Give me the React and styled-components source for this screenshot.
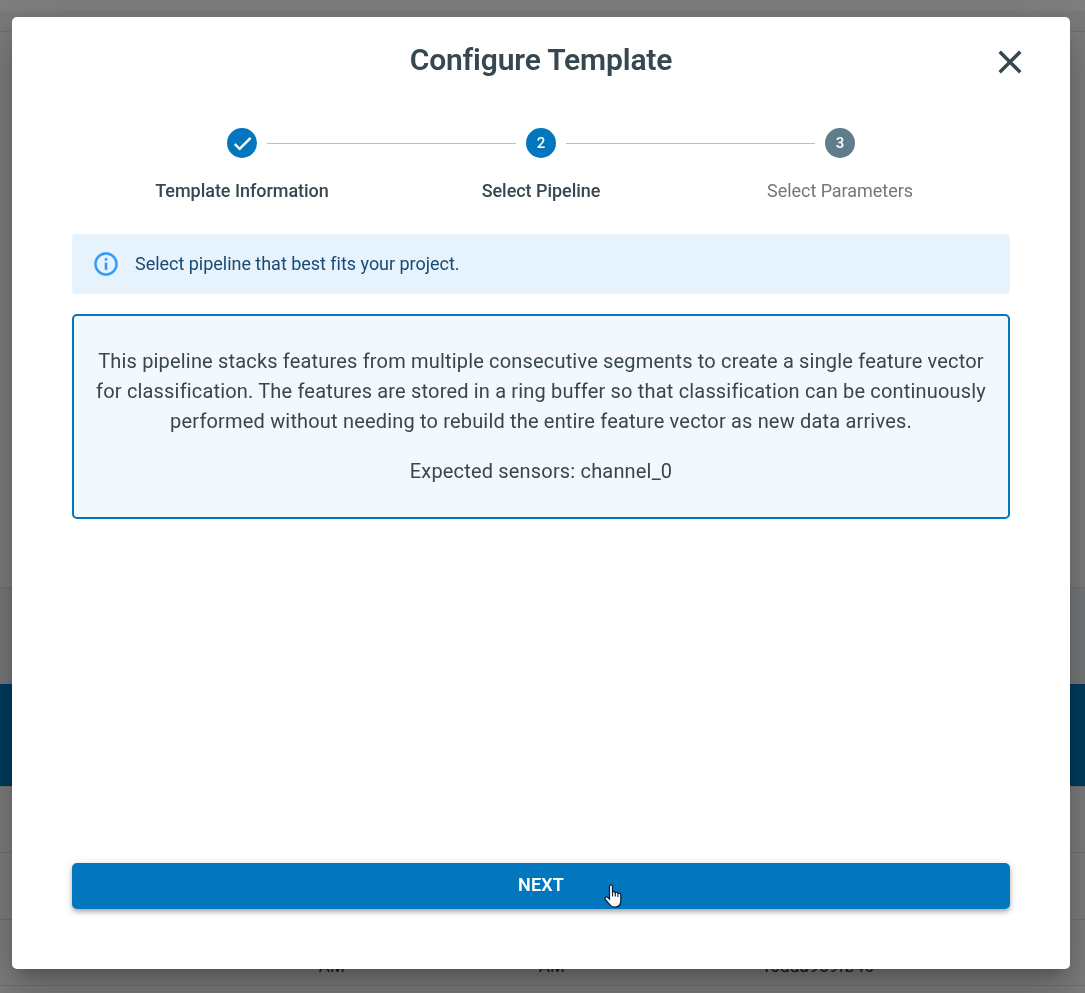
import React from "react";
import styled, { createGlobalStyle } from "styled-components";

const GlobalStyle = createGlobalStyle`
  *, *::before, *::after { box-sizing: border-box; }
  html, body { margin: 0; height: 100%; overflow: hidden; }
  body { font-family: Roboto, "Liberation Sans", sans-serif; color: #37474f; }
`;

const Page = styled.div`
  height: 993px;
  overflow: hidden;
  display: flex;
  flex-direction: column;
  background: #fafafa;
`;

const Band = styled.div`
  flex: none;
  height: ${(p) => p.$height}px;
  background: ${(p) => p.$background || "#fafafa"};
  border-bottom: ${(p) => (p.$line ? "1px solid #e0e0e0" : "none")};
`;

const TableRow = styled.div`
  flex: none;
  height: ${(p) => p.$height}px;
  border-bottom: 1px solid #e0e0e0;
  display: grid;
  grid-template-columns: 222px 220px 220px 314px;
  align-items: end;
  padding-bottom: 9px;
  text-align: center;
  font-size: 17px;
  line-height: 20px;
  letter-spacing: 0.25px;
  color: #263238;
`;

const Backdrop = styled.div`
  position: fixed;
  inset: 0;
  padding: 17px 15px 24px 12px;
  background: rgba(0, 0, 0, 0.5);
  display: flex;
`;

const Dialog = styled.section`
  flex: 1;
  display: flex;
  flex-direction: column;
  padding: 0 60px 60px;
  border-radius: 5px;
  background: #fff;
  box-shadow: 0 11px 15px -7px rgba(0, 0, 0, 0.2),
    0 24px 38px 3px rgba(0, 0, 0, 0.14), 0 9px 46px 8px rgba(0, 0, 0, 0.12);
`;

const Header = styled.header`
  height: 111px;
  padding-top: 25px;
  display: grid;
  grid-template-columns: 40px 1fr 40px;
  align-items: start;
`;

const Title = styled.h1`
  grid-column: 2;
  margin: 0;
  text-align: center;
  font-size: 30px;
  font-weight: 600;
  line-height: 36px;
  letter-spacing: -0.15px;
`;

const CloseButton = styled.button`
  width: 40px;
  height: 40px;
  margin: 0 0 0 20px;
  padding: 0;
  border: 0;
  background: none;
  color: #37474f;
  svg { display: block; }
`;

const Track = styled.div`
  display: flex;
  align-items: center;
  padding: 0 155px;
`;

const StepDot = styled.span`
  flex: none;
  width: 30px;
  height: 30px;
  border-radius: 50%;
  display: flex;
  align-items: center;
  justify-content: center;
  background: ${(p) => (p.$pending ? "#607d8b" : "#0277bd")};
  color: #fff;
  font-size: 15px;
  font-weight: 500;
  line-height: 30px;
`;

const Connector = styled.span`
  flex: 1;
  height: 1px;
  margin: 1px 10px 0;
  background: #bdbdbd;
`;

const StepLabels = styled.div`
  display: grid;
  grid-template-columns: repeat(3, 299px);
  justify-content: center;
  margin-top: 19px;
`;

const StepLabel = styled.span`
  text-align: center;
  font-size: 18px;
  line-height: 27px;
  letter-spacing: -0.04px;
  font-weight: ${(p) => (p.$pending ? 400 : 500)};
  color: ${(p) => (p.$pending ? "#757575" : "#37474f")};
`;

const Notice = styled.div`
  display: flex;
  align-items: center;
  height: 60px;
  margin-top: 30px;
  padding: 0 20px;
  gap: 15px;
  border-radius: 4px;
  background: #e6f3fd;
  color: #184a73;
  font-size: 18px;
  line-height: 26px;
  letter-spacing: -0.025px;
`;

const PipelineCard = styled.div`
  height: 205px;
  margin-top: 20px;
  padding: 30px 20px 0;
  border: 2px solid #0277bd;
  border-radius: 5px;
  background: #f2f8fc;
  text-align: center;
  font-size: 20px;
  line-height: 30px;
  letter-spacing: 0.175px;
  p { margin: 0 0 20px; }
`;

const NextButton = styled.button`
  height: 46px;
  margin-top: auto;
  padding: 0 0 2px;
  border: 0;
  border-radius: 5px;
  background: #0277bd;
  color: #fff;
  font: 600 18px/26px Roboto, sans-serif;
  letter-spacing: 0.1px;
  box-shadow: 0 2px 4px -1px rgba(0, 0, 0, 0.2),
    0 4px 5px 0 rgba(0, 0, 0, 0.14), 0 1px 10px 0 rgba(0, 0, 0, 0.12);
`;

const Pointer = styled.svg`
  position: fixed;
  left: 604px;
  top: 884px;
`;

function CheckIcon() {
  return (
    <svg width="23" height="23" viewBox="0 0 24 24" fill="#fff" stroke="#fff" strokeWidth="0.7">
      <path d="M9 16.17 4.83 12l-1.42 1.41L9 19 21 7l-1.41-1.41z" />
    </svg>
  );
}

function InfoIcon() {
  return (
    <svg width="28" height="28" viewBox="0 0 24 24" fill="#2e9bf5" stroke="#2e9bf5" strokeWidth="0.2">
      <path d="M11 7h2v2h-2zm0 4h2v6h-2zm1-9C6.480 2 2 6.480 2 12s4.480 10 10 10 10-4.480 10-10S17.520 2 12 2zm0 18c-4.410 0-8-3.590-8-8s3.590-8 8-8 8 3.590 8 8-3.590 8-8 8z" />
    </svg>
  );
}

export default function App() {
  return (
    <>
      <GlobalStyle />
      <Page>
        <Band $height={11} $background="#ffffff" />
        <Band $height={21} $background="#f5f5f5" $line />
        <Band $height={556} $line />
        <Band $height={96} $background="#eceff1" />
        <Band $height={102} $background="#0277bd" />
        <Band $height={1} $background="#e0e0e0" />
        <TableRow $height={66} />
        <TableRow $height={67} />
        <TableRow $height={66}>
          <span />
          <span>AM</span>
          <span>AM</span>
          <span>f6dda969fb46</span>
        </TableRow>
      </Page>
      <Backdrop>
        <Dialog>
          <Header>
            <Title>Configure Template</Title>
            <CloseButton aria-label="Close">
              <svg width="40" height="40" viewBox="0 0 40 40" fill="none" stroke="currentColor" strokeWidth="3.4">
                <path d="M9.700 9.700 30.300 30.300M30.300 9.700 9.700 30.300" />
              </svg>
            </CloseButton>
          </Header>
          <Track>
            <StepDot><CheckIcon /></StepDot>
            <Connector />
            <StepDot>2</StepDot>
            <Connector />
            <StepDot $pending>3</StepDot>
          </Track>
          <StepLabels>
            <StepLabel>Template Information</StepLabel>
            <StepLabel>Select Pipeline</StepLabel>
            <StepLabel $pending>Select Parameters</StepLabel>
          </StepLabels>
          <Notice>
            <InfoIcon />
            <span>Select pipeline that best fits your project.</span>
          </Notice>
          <PipelineCard>
            <p>
              This pipeline stacks features from multiple consecutive segments to create a single
              feature vector for classification. The features are stored in a ring buffer so that
              classification can be continuously performed without needing to rebuild the entire
              feature vector as new data arrives.
            </p>
            <p>Expected sensors: channel_0</p>
          </PipelineCard>
          <NextButton>NEXT</NextButton>
        </Dialog>
      </Backdrop>
      <Pointer width="19" height="25" viewBox="0 0 19 25">
        <path
          d="M5.500 2.500c0-2 3-2 3 0v5.500c.6-.8 2.500-.6 2.700.6.700-.8 2.400-.5 2.700.8 1.100-.7 2.900 0 2.900 1.600v5.500c0 4-2.300 6.500-6 6.500-3 0-4.400-1-5.800-3.200L1.300 15.300c-1.200-1.800.9-3.200 2.400-1.900l1.800 1.700z"
          fill="#fff"
          stroke="#0b1a33"
          strokeWidth="1.200"
        />
        <path d="M8.600 8v4.500M11.300 9v3.500M13.900 10v3" stroke="#0b1a33" strokeWidth="1.100" />
      </Pointer>
    </>
  );
}
